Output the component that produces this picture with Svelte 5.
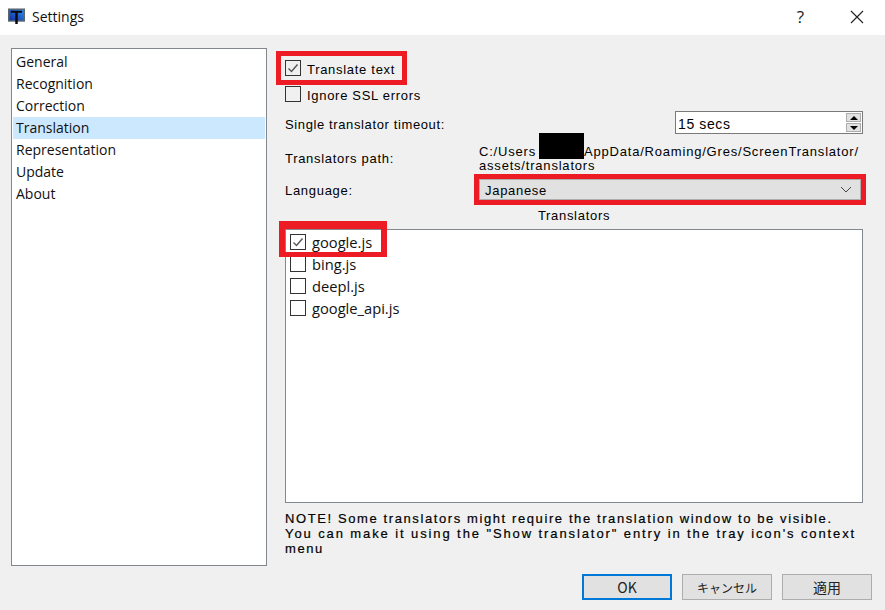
<script lang="ts">
  const pages = ["General", "Recognition", "Correction", "Translation", "Representation", "Update", "About"];
  const translators = [
    { name: "google.js", on: true },
    { name: "bing.js", on: false },
    { name: "deepl.js", on: false },
    { name: "google_api.js", on: false }
  ];
</script>

{#snippet tick(on)}
  <span class="box">
    {#if on}
      <svg width="14" height="14" viewBox="0 0 14 14"><path d="M2.5 7.5 5.5 10.5 11.5 3.5" fill="none" stroke="#555" stroke-width="1.4" /></svg>
    {/if}
  </span>
{/snippet}

<main class="dialog">
  <header class="titlebar">
    <svg class="logo" width="17" height="17" viewBox="0 0 18 18">
      <defs>
        <linearGradient id="screen" x1="0" y1="1" x2="1" y2="0">
          <stop offset="0" stop-color="#12309c" />
          <stop offset="1" stop-color="#2f8cf0" />
        </linearGradient>
      </defs>
      <rect x="0" y="0.5" width="18" height="14" fill="#5b6670" />
      <rect x="1.5" y="2" width="15" height="11" fill="url(#screen)" />
      <path d="M3 3h12v2h-4.7v12H7.7V5H3z" fill="#08080e" />
    </svg>
    <span class="title">Settings</span>
    <span class="help">?</span>
    <svg class="close" width="14" height="14" viewBox="0 0 14 14"><path d="M1 1 13 13M13 1 1 13" stroke="#222" stroke-width="1.1" /></svg>
  </header>

  <div class="body">
    <nav class="pages">
      {#each pages as page}
        <div class="page" class:current={page === "Translation"}>{page}</div>
      {/each}
    </nav>

    <section class="form">
      <div class="check first marked">{@render tick(true)}<span class="label">Translate text</span></div>
      <div class="check second">{@render tick(false)}<span class="label">Ignore SSL errors</span></div>

      <div class="timeout">
        <span class="label">Single translator timeout:</span>
        <div class="spin">
          <span class="label spin-value">15 secs</span>
          <span class="arrows">
            <span class="arrow"><i class="up"></i></span>
            <span class="arrow"><i class="down"></i></span>
          </span>
        </div>
      </div>

      <div class="path-row">
        <span>Translators path:</span>
        <div class="path">C:/Users<span class="redact"></span>AppData/Roaming/Gres/ScreenTranslator/<br />assets/translators</div>
      </div>

      <div class="language">
        <span class="label">Language:</span>
        <div class="combo">
          <span class="label">Japanese</span>
          <svg width="12" height="7" viewBox="0 0 12 7"><path d="M1 1 6 6 11 1" fill="none" stroke="#444" stroke-width="1" /></svg>
        </div>
      </div>

      <div class="list-title">Translators</div>
      <div class="list">
        {#each translators as t}
          <div class="item" class:marked={t.on}>{@render tick(t.on)}<span>{t.name}</span></div>
        {/each}
      </div>

      <p class="note">NOTE! Some translators might require the translation window to be visible.<br /><span class="wide">You can make it using the "Show translator" entry in the tray icon's context</span><br />menu</p>
    </section>
  </div>

  <footer class="buttons">
    <button class="default">OK</button>
    <button class="kana">キャンセル</button>
    <button>適用</button>
  </footer>
</main>

<style>
  :global(body) {
    margin: 0;
    background: #f0f0f0;
  }

  .dialog {
    width: 885px;
    height: 610px;
    display: flex;
    flex-direction: column;
    overflow: hidden;
    background: #f0f0f0;
    color: #000;
    font-family: "Liberation Sans", sans-serif;
    font-size: 13px;
    letter-spacing: 0.7px;
  }

  .titlebar {
    height: 35px;
    flex-shrink: 0;
    box-sizing: border-box;
    padding: 0 0 2px 8px;
    background: #fff;
    display: flex;
    align-items: center;
    font-family: "Open Sans", sans-serif;
    letter-spacing: 0;
  }

  .logo {
    margin-right: 7px;
  }

  .title {
    font-size: 14px;
    flex: 1;
    color: #111;
  }

  .help {
    font-size: 17px;
    margin-right: 46px;
    color: #222;
  }

  .close {
    margin-right: 21px;
  }

  .body {
    flex: 1;
    min-height: 0;
    display: flex;
    padding: 13px 22px 0 11px;
    gap: 18px;
  }

  .pages {
    width: 252px;
    height: 512px;
    background: #fff;
    border: 1px solid #828790;
    padding: 2px 1px;
    font-family: "Open Sans", sans-serif;
    font-size: 14px;
    letter-spacing: 0;
  }

  .page {
    height: 22px;
    line-height: 22px;
    padding-left: 3px;
    color: #111;
  }

  .page.current {
    background: #cce8ff;
  }

  .form {
    width: 578px;
    display: flex;
    flex-direction: column;
  }

  .check {
    display: flex;
    align-items: center;
    gap: 6px;
    height: 16px;
  }

  .check.first {
    margin-top: 12px;
  }

  .check.second {
    margin-top: 10px;
  }

  .label {
    padding-top: 2px;
  }

  .marked {
    position: relative;
  }

  /* the red annotation frames sit on top of the controls */
  .check.marked::after {
    content: "";
    position: absolute;
    left: -9px;
    top: -9px;
    width: 131px;
    height: 34px;
    box-sizing: border-box;
    border: 5px solid #ed1c24;
  }

  .item.marked::after {
    content: "";
    position: absolute;
    left: -11px;
    top: -10px;
    width: 108px;
    height: 36px;
    box-sizing: border-box;
    border: solid #ed1c24;
    border-width: 8px 6px 5px;
  }

  .box {
    width: 14px;
    height: 14px;
    flex-shrink: 0;
    border: 1px solid #333;
    display: block;
  }

  .box svg {
    display: block;
  }

  .timeout {
    margin-top: 9px;
    height: 24px;
    display: flex;
    align-items: flex-start;
    justify-content: space-between;
    line-height: 24px;
    letter-spacing: 0.62px;
  }

  .spin {
    width: 184px;
    height: 21px;
    background: #fff;
    border: 1px solid #7a7a7a;
    display: flex;
    align-items: center;
    justify-content: space-between;
    padding-left: 2px;
    font-size: 14px;
    line-height: 20px;
  }

  .arrows {
    width: 15px;
    margin-right: 1px;
    display: flex;
    flex-direction: column;
    gap: 1px;
  }

  .arrow {
    height: 9px;
    background: #e1e1e1;
    border: 1px solid #adadad;
    box-sizing: border-box;
    display: flex;
    align-items: center;
    justify-content: center;
  }

  .arrow i {
    width: 0;
    height: 0;
    border-left: 4px solid transparent;
    border-right: 4px solid transparent;
  }

  .up {
    border-bottom: 4px solid #000;
  }

  .down {
    border-top: 4px solid #000;
  }

  .path-row {
    margin-top: 9px;
    height: 29px;
    display: flex;
    align-items: center;
  }

  .path-row > span {
    width: 194px;
  }

  .path {
    line-height: 14px;
    white-space: nowrap;
    letter-spacing: 0.8px;
  }

  .redact {
    display: inline-block;
    width: 45px;
    height: 26px;
    margin: -16px 0 -3px 3px;
    background: #000;
  }

  .language {
    margin-top: 5px;
    height: 22px;
    display: flex;
    align-items: center;
  }

  .language > .label {
    width: 194px;
  }

  .combo {
    width: 382px;
    height: 21px;
    box-sizing: border-box;
    background: #e1e1e1;
    border: 1px solid #adadad;
    display: flex;
    align-items: center;
    justify-content: space-between;
    padding: 0 8px 0 5px;
    outline: 5px solid #ed1c24;
  }

  .list-title {
    margin-top: 8px;
    height: 15px;
    line-height: 15px;
    text-align: center;
  }

  .list {
    margin-top: 6px;
    height: 270px;
    background: #fff;
    border: 1px solid #828790;
    padding: 1px 4px;
    font-family: "Open Sans", sans-serif;
    font-size: 14.7px;
    letter-spacing: 0;
  }

  .item {
    height: 22px;
    display: flex;
    align-items: center;
    gap: 6px;
    color: #111;
  }

  .note {
    margin: 8px 0 0;
    line-height: 15px;
    letter-spacing: 1.6px;
    -webkit-text-stroke: 0.2px #000;
    white-space: nowrap;
  }

  .wide {
    letter-spacing: 1.9px;
  }

  .buttons {
    height: 36px;
    flex-shrink: 0;
    display: flex;
    justify-content: flex-end;
    gap: 10px;
    padding-right: 13px;
  }

  button {
    width: 90px;
    height: 26px;
    padding: 0;
    background: #e1e1e1;
    border: 1px solid #adadad;
    border-radius: 0;
    font-family: "Noto Sans CJK JP", "Liberation Sans", sans-serif;
    font-size: 14px;
    letter-spacing: 0;
    color: #222;
  }

  button.kana {
    font-size: 12px;
  }

  button.default {
    border: 2px solid #0078d7;
  }
</style>
